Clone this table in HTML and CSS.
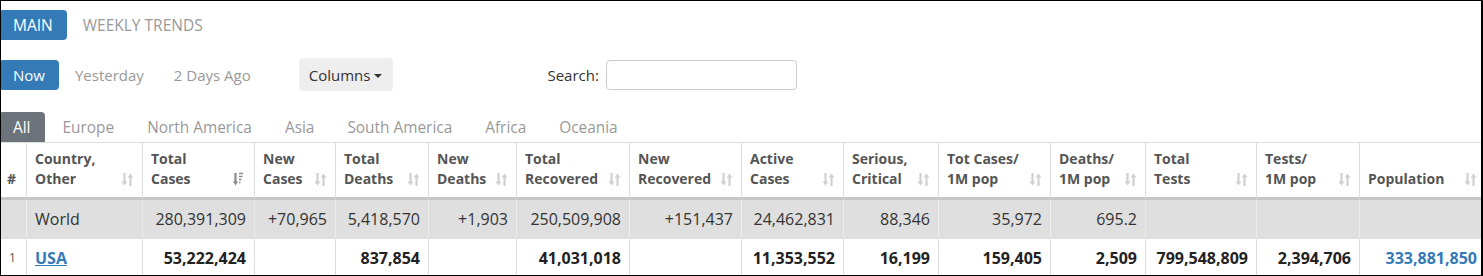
FILE: index.html
```html
<!DOCTYPE html>
<html lang="en">
<head>
<meta charset="utf-8">
<title>Coronavirus statistics</title>
<link rel="stylesheet" href="styles.css">
</head>
<body>
<div class="frame">
  <div class="page">
    <nav class="main-nav">
      <a class="pill active" href="#">MAIN</a>
      <a class="pill" href="#">WEEKLY TRENDS</a>
    </nav>

    <div class="toolbar">
      <nav class="day-nav">
        <a class="pill active" href="#">Now</a>
        <a class="pill" href="#">Yesterday</a>
        <a class="pill" href="#">2 Days Ago</a>
      </nav>
      <button class="columns-btn" type="button">Columns <span class="caret"></span></button>
      <label class="search">Search: <input type="search"></label>
    </div>

    <ul class="region-tabs">
      <li class="active">All</li>
      <li>Europe</li>
      <li>North America</li>
      <li>Asia</li>
      <li>South America</li>
      <li>Africa</li>
      <li>Oceania</li>
    </ul>

    <table class="stats">
      <thead>
        <tr>
          <th class="w-idx"><div class="th-in"><span>#</span></div></th>
          <th class="w-country"><div class="th-in"><span>Country,<br>Other</span><svg class="sort" viewBox="0 0 13 15"><path d="M3.5 1v10"/><path class="head" d="M0.5 9.5h6l-3 4z"/><path d="M9.5 14v-10"/><path class="head" d="M6.5 5.5h6l-3-4z"/></svg></div></th>
          <th class="w-tc"><div class="th-in"><span>Total<br>Cases</span><svg class="sort desc" viewBox="0 0 13 15"><path d="M2.5 1v10"/><path class="head" d="M0 9.5h5l-2.5 4z"/><path class="bar" d="M6 1.5h4M6 4.5h3.5M6 7.5h2.5M6 10.5h1.5"/></svg></div></th>
          <th class="w-nc"><div class="th-in"><span>New<br>Cases</span><svg class="sort" viewBox="0 0 13 15"><path d="M3.5 1v10"/><path class="head" d="M0.5 9.5h6l-3 4z"/><path d="M9.5 14v-10"/><path class="head" d="M6.5 5.5h6l-3-4z"/></svg></div></th>
          <th class="w-td"><div class="th-in"><span>Total<br>Deaths</span><svg class="sort" viewBox="0 0 13 15"><path d="M3.5 1v10"/><path class="head" d="M0.5 9.5h6l-3 4z"/><path d="M9.5 14v-10"/><path class="head" d="M6.5 5.5h6l-3-4z"/></svg></div></th>
          <th class="w-nd"><div class="th-in"><span>New<br>Deaths</span><svg class="sort" viewBox="0 0 13 15"><path d="M3.5 1v10"/><path class="head" d="M0.5 9.5h6l-3 4z"/><path d="M9.5 14v-10"/><path class="head" d="M6.5 5.5h6l-3-4z"/></svg></div></th>
          <th class="w-tr"><div class="th-in"><span>Total<br>Recovered</span><svg class="sort" viewBox="0 0 13 15"><path d="M3.5 1v10"/><path class="head" d="M0.5 9.5h6l-3 4z"/><path d="M9.5 14v-10"/><path class="head" d="M6.5 5.5h6l-3-4z"/></svg></div></th>
          <th class="w-nr"><div class="th-in"><span>New<br>Recovered</span><svg class="sort" viewBox="0 0 13 15"><path d="M3.5 1v10"/><path class="head" d="M0.5 9.5h6l-3 4z"/><path d="M9.5 14v-10"/><path class="head" d="M6.5 5.5h6l-3-4z"/></svg></div></th>
          <th class="w-ac"><div class="th-in"><span>Active<br>Cases</span><svg class="sort" viewBox="0 0 13 15"><path d="M3.5 1v10"/><path class="head" d="M0.5 9.5h6l-3 4z"/><path d="M9.5 14v-10"/><path class="head" d="M6.5 5.5h6l-3-4z"/></svg></div></th>
          <th class="w-sc"><div class="th-in"><span>Serious,<br>Critical</span><svg class="sort" viewBox="0 0 13 15"><path d="M3.5 1v10"/><path class="head" d="M0.5 9.5h6l-3 4z"/><path d="M9.5 14v-10"/><path class="head" d="M6.5 5.5h6l-3-4z"/></svg></div></th>
          <th class="w-tcm"><div class="th-in"><span>Tot&nbsp;Cases/<br>1M pop</span><svg class="sort" viewBox="0 0 13 15"><path d="M3.5 1v10"/><path class="head" d="M0.5 9.5h6l-3 4z"/><path d="M9.5 14v-10"/><path class="head" d="M6.5 5.5h6l-3-4z"/></svg></div></th>
          <th class="w-dm"><div class="th-in"><span>Deaths/<br>1M pop</span><svg class="sort" viewBox="0 0 13 15"><path d="M3.5 1v10"/><path class="head" d="M0.5 9.5h6l-3 4z"/><path d="M9.5 14v-10"/><path class="head" d="M6.5 5.5h6l-3-4z"/></svg></div></th>
          <th class="w-tt"><div class="th-in"><span>Total<br>Tests</span><svg class="sort" viewBox="0 0 13 15"><path d="M3.5 1v10"/><path class="head" d="M0.5 9.5h6l-3 4z"/><path d="M9.5 14v-10"/><path class="head" d="M6.5 5.5h6l-3-4z"/></svg></div></th>
          <th class="w-tm"><div class="th-in"><span>Tests/<br>1M pop</span><svg class="sort" viewBox="0 0 13 15"><path d="M3.5 1v10"/><path class="head" d="M0.5 9.5h6l-3 4z"/><path d="M9.5 14v-10"/><path class="head" d="M6.5 5.5h6l-3-4z"/></svg></div></th>
          <th class="w-pop"><div class="th-in"><span>Population</span><svg class="sort" viewBox="0 0 13 15"><path d="M3.5 1v10"/><path class="head" d="M0.5 9.5h6l-3 4z"/><path d="M9.5 14v-10"/><path class="head" d="M6.5 5.5h6l-3-4z"/></svg></div></th>
        </tr>
      </thead>
      <tbody>
        <tr class="world">
          <td class="idx"></td>
          <td class="name">World</td>
          <td>280,391,309</td>
          <td>+70,965</td>
          <td>5,418,570</td>
          <td>+1,903</td>
          <td>250,509,908</td>
          <td>+151,437</td>
          <td>24,462,831</td>
          <td>88,346</td>
          <td>35,972</td>
          <td>695.2</td>
          <td></td>
          <td></td>
          <td></td>
        </tr>
        <tr class="country">
          <td class="idx">1</td>
          <td class="name"><a class="country-link" href="#">USA</a></td>
          <td>53,222,424</td>
          <td></td>
          <td>837,854</td>
          <td></td>
          <td>41,031,018</td>
          <td></td>
          <td>11,353,552</td>
          <td>16,199</td>
          <td>159,405</td>
          <td>2,509</td>
          <td>799,548,809</td>
          <td>2,394,706</td>
          <td><a class="pop-link" href="#">333,881,850</a></td>
        </tr>
      </tbody>
    </table>
  </div>
</div>
</body>
</html>
```

FILE: styles.css
```css
html, body {
  margin: 0;
  padding: 0;
  background: #fff;
}

body {
  font-family: "Open Sans", "Segoe UI", sans-serif;
  color: #333;
}

.frame {
  width: 1483px;
  height: 276px;
  box-sizing: border-box;
  border: 1px solid #000;
  border-right-width: 2px;
  overflow: hidden;
  background: #fff;
}

.page {
  margin-left: -2px;
}

/* pills */
.main-nav {
  display: flex;
  gap: 2px;
  margin-top: 9px;
}

.pill {
  display: flex;
  align-items: center;
  height: 30px;
  padding: 0 14px;
  border-radius: 4px;
  font-size: 15px;
  color: #999;
  text-decoration: none;
}

.main-nav .pill {
  font-size: 15.5px;
}

.pill.active {
  background: #337ab7;
  color: #fff;
}

.toolbar {
  display: flex;
  align-items: center;
  height: 33px;
  margin-top: 18px;
}

.day-nav {
  display: flex;
  gap: 2px;
}

.columns-btn {
  display: flex;
  align-items: center;
  gap: 4px;
  height: 33px;
  margin-left: 34px;
  padding: 0 11px 0 10px;
  border: 0;
  border-radius: 4px;
  background: #eee;
  color: #333;
  font-family: "Open Sans", "Segoe UI", sans-serif;
  font-size: 15px;
}

.caret {
  width: 0;
  height: 0;
  margin-top: 2px;
  border-top: 4px solid #333;
  border-left: 4px solid transparent;
  border-right: 4px solid transparent;
}

.search {
  display: flex;
  align-items: center;
  gap: 7px;
  margin-left: 154px;
  font-size: 15px;
  color: #333;
}

.search input {
  width: 191px;
  height: 30px;
  box-sizing: border-box;
  border: 1px solid #ccc;
  border-radius: 4px;
  margin: 0;
}

/* region tabs */
.region-tabs {
  display: flex;
  gap: 3px;
  margin: 21px 0 0;
  padding: 0;
  list-style: none;
}

.region-tabs li {
  display: flex;
  align-items: center;
  height: 30px;
  padding: 0 15px;
  border-radius: 4px 4px 0 0;
  font-size: 15.4px;
  color: #999;
}

.region-tabs li.active {
  padding: 0 14px;
  background: #6c737b;
  color: #fff;
}

/* table */
.stats {
  table-layout: fixed;
  width: 1487px;
  border-collapse: separate;
  border-spacing: 0;
}

.stats th,
.stats td {
  box-sizing: border-box;
  border-right: 1px solid #ddd;
}

.stats th {
  vertical-align: bottom;
  padding: 6px 8px 8px;
  border-top: 1px solid #ddd;
  border-bottom: 3px solid #c6c6c6;
  font-size: 14px;
  line-height: 20px;
  font-weight: bold;
  color: #555;
  text-align: left;
}

.th-in {
  display: flex;
  justify-content: space-between;
  align-items: flex-end;
}

.sort {
  flex: none;
  width: 13px;
  height: 15px;
  margin-bottom: 2px;
  fill: none;
  stroke: #d0d0d0;
  stroke-width: 2.2;
}

.sort .head {
  fill: #d0d0d0;
  stroke: none;
}

.sort.desc {
  stroke: #8a8a8a;
}

.sort.desc .head {
  fill: #8a8a8a;
}

.sort .bar {
  stroke-width: 1.6;
}

.w-idx { width: 28px; }
.w-country { width: 116px; }
.w-tc { width: 112px; }
.w-nc { width: 81px; }
.w-td { width: 93px; }
.w-nd { width: 88px; }
.w-tr { width: 113px; }
.w-nr { width: 112px; }
.w-ac { width: 102px; }
.w-sc { width: 95px; }
.w-tcm { width: 112px; }
.w-dm { width: 95px; }
.w-tt { width: 111px; }
.w-tm { width: 103px; }
.w-pop { width: 126px; }

.stats td {
  padding: 8px;
  font-size: 16px;
  line-height: 22px;
  text-align: right;
  white-space: nowrap;
  border-bottom: 1px solid #ddd;
}

.stats td.name {
  text-align: left;
}

.stats td.idx {
  text-align: center;
  padding: 8px 0;
  font-size: 12px;
  font-weight: normal;
  color: #555;
}

.world td {
  background: #dfdfdf;
  border-right-color: #ececec;
  color: #333;
}

.country td {
  font-weight: bold;
  color: #222;
}

.country-link {
  color: #337ab7;
  text-decoration: underline;
}

.pop-link {
  color: #337ab7;
  text-decoration: none;
}
```
